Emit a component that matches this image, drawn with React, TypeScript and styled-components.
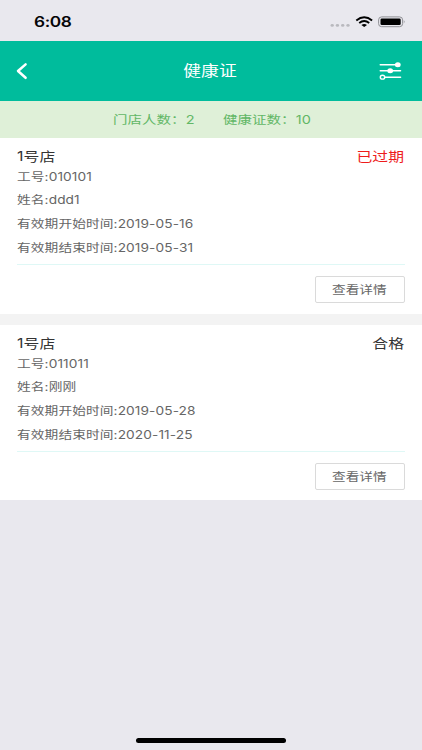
import React from "react";
import styled, { createGlobalStyle } from "styled-components";

const Global = createGlobalStyle`
  * { box-sizing: border-box; }
  html, body, #root { height: 100%; }
  body {
    margin: 0;
    background: #e9e8ee;
    font-family: Inter, "Noto Sans CJK SC", sans-serif;
    overflow: hidden;
  }
`;

const Screen = styled.div`
  width: 422px;
  height: 750px;
  display: flex;
  flex-direction: column;
  background: #e9e8ee;
`;

/* Wide-set lettering used by every label in the app. */
const Wide = styled.span<{ $from?: string; $spacing?: number; $word?: number }>`
  display: inline-block;
  white-space: pre;
  letter-spacing: ${(p) => p.$spacing ?? 0}px;
  word-spacing: ${(p) => p.$word ?? 0}px;
  transform: scaleX(1.218);
  transform-origin: ${(p) => p.$from ?? "left"} center;
`;

const StatusBar = styled.div`
  height: 41px;
  flex: none;
  display: flex;
  align-items: center;
  justify-content: space-between;
  padding: 2px 16px 0 34px;
`;

const Clock = styled.div`
  font-size: 14.2px;
  font-weight: 600;
  line-height: 20px;
  color: #050507;
`;

const StatusIcons = styled.svg`
  width: 78px;
  height: 16px;
`;

const Header = styled.header`
  height: 60px;
  flex: none;
  display: grid;
  grid-template-columns: 60px 1fr 60px;
  align-items: center;
  background: #00bc9c;
  color: #fff;
`;

const Title = styled.h1`
  margin: 0;
  padding-right: 1.5px;
  text-align: center;
  font-size: 14.6px;
  line-height: 20px;
  font-weight: 400;
`;

const IconButton = styled.button<{ $side: "left" | "right" }>`
  display: flex;
  justify-content: ${(p) => (p.$side === "left" ? "flex-start" : "flex-end")};
  padding: 0 16px;
  border: 0;
  background: none;
  color: inherit;
`;

const Summary = styled.div`
  height: 37px;
  flex: none;
  display: flex;
  padding-left: 113px;
  background: #dff0d8;
  color: #62b766;
  font-size: 11.9px;
  line-height: 38px;
`;

const SummaryItem = styled.div`
  width: 109.5px;
`;

const Card = styled.section<{ $height: number }>`
  height: ${(p) => p.$height}px;
  flex: none;
  padding: 7.5px 17px 0 17px;
  background: #fff;
  & + & {
    border-top: 11px solid #f3f3f3;
  }
`;

const CardHead = styled.div`
  height: 20px;
  display: flex;
  justify-content: space-between;
  font-size: 13px;
  line-height: 20px;
  color: #333;
`;

const Status = styled.div<{ $expired: boolean }>`
  padding-right: 0.8px;
  color: ${(p) => (p.$expired ? "#ee1c1c" : "#333")};
`;

const Row = styled.div`
  height: 23.7px;
  font-size: 11.25px;
  line-height: 23.7px;
  color: #666;
`;

const Divider = styled.div`
  height: 1px;
  margin-top: 3.7px;
  background: #dff8f6;
`;

const Actions = styled.div`
  display: flex;
  justify-content: flex-end;
  padding-top: 11px;
`;

const DetailButton = styled.button`
  width: 90px;
  height: 27px;
  padding: 0 2px 0 0;
  border: 1px solid #dadada;
  border-radius: 2px;
  background: #fff;
  color: #666;
  font: inherit;
  font-size: 11.2px;
`;

const Footer = styled.footer`
  margin-top: auto;
  display: flex;
  justify-content: center;
  padding-bottom: 7.5px;
`;

const HomeBar = styled.div`
  width: 150px;
  height: 4.8px;
  border-radius: 3px;
  background: #000;
`;

interface Certificate {
  store: string;
  status: string;
  expired: boolean;
  height: number;
  rows: string[];
}

const certificates: Certificate[] = [
  {
    store: "1号店",
    status: "已过期",
    expired: true,
    height: 176,
    rows: ["工号:010101", "姓名:ddd1", "有效期开始时间:2019-05-16", "有效期结束时间:2019-05-31"],
  },
  {
    store: "1号店",
    status: "合格",
    expired: false,
    height: 186,
    rows: ["工号:011011", "姓名:刚刚", "有效期开始时间:2019-05-28", "有效期结束时间:2020-11-25"],
  },
];

export default function App() {
  return (
    <Screen>
      <Global />
      <StatusBar>
        <Clock>
          <Wide $spacing={-0.35}>6:08</Wide>
        </Clock>
        <StatusIcons viewBox="0 0 78 16">
          {[4.2, 9.4, 14.7, 20].map((x) => (
            <ellipse key={x} cx={x} cy={11.4} rx={1.7} ry={1.4} fill="#b9b9be" />
          ))}
          <g fill="none" stroke="#000" strokeWidth={1.9}>
            <path d="M28.3 6.4 Q36.2 0 44.1 6.4" />
            <path d="M31.2 8.9 Q36.2 4.9 41.2 8.9" />
          </g>
          <path d="M33.4 10.9 Q36.2 8.9 39 10.9 L36.2 13.1 Z" fill="#000" />
          <rect x={50.6} y={2.9} width={24} height={9.8} rx={3} fill="none" stroke="#909095" />
          <rect x={52.5} y={4.5} width={20.2} height={6.6} rx={1.3} fill="#000" />
          <path d="M75.8 6 Q77.6 7.8 75.8 9.6 Z" fill="#909095" />
        </StatusIcons>
      </StatusBar>
      <Header>
        <IconButton $side="left" aria-label="返回">
          <svg width="12" height="18" viewBox="0 0 12 18" fill="none">
            <path d="M9.6 2.4 L2 9 L9.6 15.8" stroke="#fff" strokeWidth={2.5} strokeLinecap="round" strokeLinejoin="round" />
          </svg>
        </IconButton>
        <Title>
          <Wide $from="center" $spacing={0.1}>健康证</Wide>
        </Title>
        <IconButton $side="right" aria-label="筛选">
          <svg width="28" height="20" viewBox="0 0 28 20">
            <path d="M2.2 3.7 H20 M2.2 9.8 H22.6 M6.5 16.2 H22.6" stroke="#fff" strokeWidth={1.4} strokeLinecap="round" />
            <ellipse cx={19.8} cy={3.7} rx={2.9} ry={2.5} fill="#fff" />
            <ellipse cx={12.2} cy={9.8} rx={2.9} ry={2.5} fill="#fff" />
            <ellipse cx={4.5} cy={16.2} rx={2.2} ry={1.9} fill="#00bc9c" stroke="#fff" strokeWidth={1.4} />
          </svg>
        </IconButton>
      </Header>
      <Summary>
        <SummaryItem>
          <Wide $word={-3}>门店人数： 2</Wide>
        </SummaryItem>
        <SummaryItem>
          <Wide $word={-3}>健康证数： 10</Wide>
        </SummaryItem>
      </Summary>
      {certificates.map((c, i) => (
        <Card key={i} $height={c.height}>
          <CardHead>
            <Wide $spacing={0.1}>{c.store}</Wide>
            <Status $expired={c.expired}>
              <Wide $from="right">{c.status}</Wide>
            </Status>
          </CardHead>
          {c.rows.map((row) => (
            <Row key={row}>
              <Wide $spacing={0.08}>{row}</Wide>
            </Row>
          ))}
          <Divider />
          <Actions>
            <DetailButton>
              <Wide $from="center">查看详情</Wide>
            </DetailButton>
          </Actions>
        </Card>
      ))}
      <Footer>
        <HomeBar />
      </Footer>
    </Screen>
  );
}
